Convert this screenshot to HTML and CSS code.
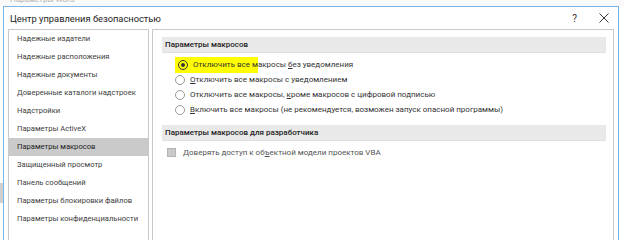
FILE: index.html
```html
<!DOCTYPE html>
<html lang="ru">

<head>
  <meta charset="UTF-8" />
  <title>Центр управления безопасностью</title>
  <link rel="stylesheet" href="styles.css">
</head>

<body>
  <div class="backdrop">
    <div class="behind-title">
      <span>Параметры Word</span>
    </div>
    <div class="behind-row">
      <div class="behind-left">
        <div class="behind-sel"></div>
      </div>

      <div class="dialog">
        <div class="dialog-title">
          <span class="title-text">Центр управления безопасностью</span>
          <div class="title-btns">
            <span class="help">?</span>
            <svg class="close" width="10" height="10" viewBox="0 0 10 10">
              <path d="M0.5 0.5 L9.5 9.5 M9.5 0.5 L0.5 9.5" stroke="#333" stroke-width="1" fill="none" />
            </svg>
          </div>
        </div>

        <div class="dialog-body">
          <ul class="nav">
            <li>Надежные издатели</li>
            <li>Надежные расположения</li>
            <li>Надежные документы</li>
            <li>Доверенные каталоги надстроек</li>
            <li>Надстройки</li>
            <li>Параметры ActiveX</li>
            <li class="active">Параметры макросов</li>
            <li>Защищенный просмотр</li>
            <li>Панель сообщений</li>
            <li>Параметры блокировки файлов</li>
            <li>Параметры конфиденциальности</li>
          </ul>

          <div class="panel">
            <div class="section-head">Параметры макросов</div>
            <div class="options">
              <div class="opt">
                <span class="hl"><span class="radio checked"></span><span>Отключить все м</span></span><span>акросы <u>б</u>ез уведомления</span>
              </div>
              <div class="opt">
                <span class="radio"></span><span><u>О</u>тключить все макросы с уведомлением</span>
              </div>
              <div class="opt">
                <span class="radio"></span><span>Отключить все макросы, <u>к</u>роме макросов с цифровой подписью</span>
              </div>
              <div class="opt">
                <span class="radio"></span><span><u>В</u>ключить все макросы (не рекомендуется, возможен запуск опасной программы)</span>
              </div>
            </div>

            <div class="section-head second">Параметры макросов для разработчика</div>
            <div class="check-row">
              <span class="checkbox"></span><span>Доверять доступ к об<u>ъ</u>ектной модели проектов VBA</span>
            </div>
          </div>
        </div>
      </div>
    </div>
  </div>
</body>

</html>
```

FILE: styles.css
```css
* {
  margin: 0;
  padding: 0;
  box-sizing: border-box;
}

body {
  width: 624px;
  height: 240px;
  overflow: hidden;
  background: #fff;
  font-family: Roboto, 'Noto Sans', sans-serif;
  font-size: 8px;
  color: #333;
}

.backdrop {
  display: flex;
  flex-direction: column;
  height: 240px;
}

.behind-title {
  height: 6px;
  overflow: hidden;
  padding-left: 10px;
  background: #fafafa;
}

.behind-title span {
  display: block;
  margin-top: -5px;
  line-height: 10px;
  font-size: 8px;
  color: #b0b0b0;
}

.behind-row {
  display: flex;
  flex: 1;
}

.behind-left {
  width: 3px;
  padding-top: 177px;
}

.behind-sel {
  height: 20px;
  background: #cfcfcf;
}

.dialog {
  width: 616px;
  border: 1px solid #7cb4e8;
  border-bottom: none;
  background: #fff;
  display: flex;
  flex-direction: column;
}

.dialog-title {
  height: 22px;
  display: flex;
  align-items: center;
  justify-content: space-between;
  padding: 0 9px 0 6px;
}

.title-text {
  font-size: 9.3px;
  color: #222;
}

.title-btns {
  display: flex;
  align-items: center;
  gap: 22px;
}

.help {
  font-size: 10px;
  color: #333;
}

.dialog-body {
  display: flex;
  gap: 3px;
  padding: 0 4px;
  flex: 1;
}

.nav {
  list-style: none;
  width: 141px;
  border: 1px solid #cacaca;
  border-bottom: none;
}

.nav li {
  height: 18px;
  line-height: 18px;
  padding-left: 8px;
  font-size: 7.6px;
  color: #404040;
  white-space: nowrap;
}

.nav li.active {
  background: #cacaca;
  color: #222;
}

.panel {
  width: 462px;
  border: 1px solid #cacaca;
  border-bottom: none;
  padding: 7px 7px 0 9px;
}

.section-head {
  height: 16px;
  line-height: 15px;
  padding-left: 3px;
  background: #e9e9e9;
  border-bottom: 1px solid #e0e0e0;
  font-weight: 500;
  color: #222;
}

.section-head.second {
  margin-top: 8px;
}

.options {
  padding: 4px 0 0 13px;
}

.opt {
  height: 15px;
  display: flex;
  align-items: center;
  white-space: nowrap;
  color: #333;
}

.radio {
  width: 10px;
  height: 10px;
  border: 1px solid #999;
  border-radius: 50%;
  margin-right: 5px;
  flex-shrink: 0;
  display: flex;
  align-items: center;
  justify-content: center;
}

.radio.checked {
  border-color: #333;
}

.radio.checked::after {
  content: '';
  width: 4px;
  height: 4px;
  border-radius: 50%;
  background: #333;
}

.hl {
  display: flex;
  align-items: center;
  height: 16px;
  padding-left: 3px;
  background: #ffff00;
}

.check-row {
  height: 15px;
  margin-top: 4px;
  padding-left: 5px;
  display: flex;
  align-items: center;
  gap: 7px;
  color: #555;
}

.checkbox {
  width: 9px;
  height: 9px;
  background: #c9c9c9;
  border: 1px solid #b4b4b4;
}
```
